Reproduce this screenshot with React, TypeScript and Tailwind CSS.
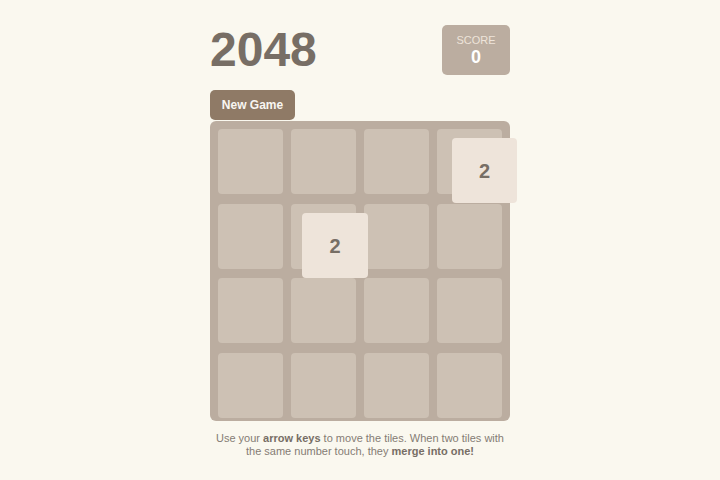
export default function App() {
  const cells = Array.from({ length: 16 });
  return (
    <div className="min-h-[480px] w-full bg-[#faf8ef] font-['Liberation_Sans',Arial,sans-serif]">
      <div className="mx-auto w-[300px] pt-[25px]">
        <div className="flex items-start justify-between">
          <h1 className="mt-px text-[48px] font-bold leading-none text-[#776e65]">2048</h1>
          <div className="flex h-[50px] w-[68px] flex-col items-center justify-center rounded-[5px] bg-[#bbada0]">
            <span className="text-[11px] leading-[13px] text-[#eee4da]">SCORE</span>
            <span className="text-[18px] font-bold leading-[20px] text-white">0</span>
          </div>
        </div>
        <button className="mt-[15px] h-[30px] w-[85px] rounded-[5px] bg-[#8f7a66] text-[12px] font-bold text-[#f9f6f2]">
          New Game
        </button>
        <div className="relative mt-px h-[300px] w-[300px] rounded-[6px] bg-[#bbada0] px-2 pt-2">
          <div className="grid grid-cols-4 gap-x-2 gap-y-[9.5px]">
            {cells.map((_, i) => (
              <div key={i} className="h-[65px] rounded-[4px] bg-[#cdc1b4]" />
            ))}
          </div>
          <div className="absolute left-[242px] top-[17px] flex h-[65px] w-[65px] items-center justify-center rounded-[4px] bg-[#eee4da] text-[20px] font-bold text-[#776e65]">
            2
          </div>
          <div className="absolute left-[92px] top-[92px] flex h-[65px] w-[66px] items-center justify-center rounded-[4px] bg-[#eee4da] text-[20px] font-bold text-[#776e65]">
            2
          </div>
        </div>
        <p className="mt-[11px] text-center text-[11px] leading-[13px] text-[#857c74]">
          Use your <strong className="text-[#776e65]">arrow keys</strong> to move the tiles. When two tiles with the same
          number touch, they <strong className="text-[#776e65]">merge into one!</strong>
        </p>
      </div>
    </div>
  );
}
